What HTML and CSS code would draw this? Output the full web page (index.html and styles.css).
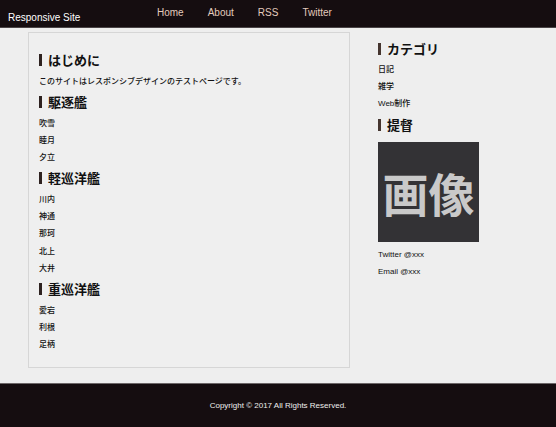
FILE: index.html
```html
<!DOCTYPE html>
<html lang="ja">
<head>
<meta charset="utf-8">
<title>Responsive Site</title>
<link rel="stylesheet" href="styles.css">
</head>
<body>
<header class="site-header">
  <div class="logo">Responsive Site</div>
  <nav class="nav">
    <a href="#">Home</a>
    <a href="#">About</a>
    <a href="#">RSS</a>
    <a href="#">Twitter</a>
  </nav>
</header>
<div class="wrap">
  <main class="main">
    <h2 class="heading">はじめに</h2>
    <p class="text">このサイトはレスポンシブデザインのテストページです。</p>
    <h2 class="heading">駆逐艦</h2>
    <ul class="list">
      <li>吹雪</li>
      <li>睦月</li>
      <li>夕立</li>
    </ul>
    <h2 class="heading">軽巡洋艦</h2>
    <ul class="list">
      <li>川内</li>
      <li>神通</li>
      <li>那珂</li>
      <li>北上</li>
      <li>大井</li>
    </ul>
    <h2 class="heading">重巡洋艦</h2>
    <ul class="list">
      <li>愛宕</li>
      <li>利根</li>
      <li>足柄</li>
    </ul>
  </main>
  <aside class="side">
    <h3 class="heading">カテゴリ</h3>
    <ul class="list">
      <li>日記</li>
      <li>雑学</li>
      <li>Web制作</li>
    </ul>
    <h3 class="heading">提督</h3>
    <div class="photo">画像</div>
    <ul class="list">
      <li>Twitter @xxx</li>
      <li>Email @xxx</li>
    </ul>
  </aside>
</div>
<footer class="site-footer">Copyright © 2017 All Rights Reserved.</footer>
</body>
</html>
```

FILE: styles.css
```css
* { box-sizing: border-box; }
html, body { margin: 0; padding: 0; }
body {
  background: #eeeeee;
  color: #111;
  font-family: "Liberation Sans", "Noto Sans CJK JP", sans-serif;
  width: 556px;
  height: 427px;
  overflow: hidden;
}
.site-header {
  height: 28px;
  background: #150d10;
  border-bottom: 1px solid #4a4446;
  display: flex;
  align-items: flex-start;
}
.logo {
  color: #fff;
  font-size: 10px;
  line-height: 12px;
  padding: 12px 0 0 8px;
  width: 157px;
}
.nav {
  display: flex;
  gap: 24px;
  padding-top: 7px;
}
.nav a {
  color: #e3cbbd;
  text-decoration: none;
  font-size: 10px;
  line-height: 12px;
}
.wrap {
  display: flex;
  align-items: flex-start;
  gap: 28px;
  padding: 4px 0 15px 28px;
}
.main {
  width: 322px;
  height: 336px;
  border: 1px solid #d6d6d6;
  background: #efefef;
  padding: 14px 10px 15px 10px;
}
.side {
  width: 150px;
  padding-top: 4px;
}
.heading {
  margin: 0;
  font-family: "Noto Sans CJK JP", sans-serif;
  font-weight: 700;
  font-size: 13px;
  line-height: 25px;
  color: #111;
}
.heading::before {
  content: "";
  display: inline-block;
  width: 3px;
  height: 12px;
  background: #2e2220;
  margin-right: 6px;
  vertical-align: -1px;
}
.side .heading::before { background: #45352f; }
.text {
  margin: 0;
  font-family: "Noto Sans CJK JP", sans-serif;
  font-weight: 500;
  font-size: 8px;
  line-height: 17px;
}
.list {
  list-style: none;
  margin: 0;
  padding: 0;
  font-size: 8px;
  line-height: 17.1px;
  font-weight: 500;
}
.main .list { font-family: "Noto Sans CJK JP", sans-serif; }
.photo {
  width: 101px;
  height: 100px;
  margin: 5px 0 4px 0;
  background: #333235;
  color: #c9c9c9;
  font-family: "Noto Sans CJK JP", sans-serif;
  font-weight: 700;
  font-size: 46px;
  display: flex;
  align-items: center;
  justify-content: center;
}
.site-footer {
  height: 44px;
  background: #150d10;
  border-top: 1px solid #6c6668;
  color: #eee;
  font-size: 8px;
  text-align: center;
  line-height: 43px;
}
```
